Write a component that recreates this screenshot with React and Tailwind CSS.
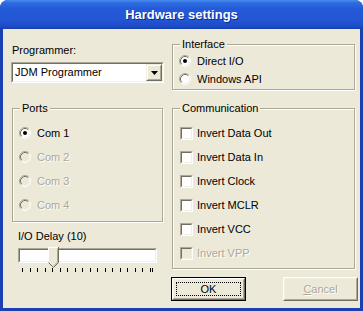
import React from "react";

const face = "bg-[#ECE9D8]";

function Radio({ checked, disabled }) {
  return (
    <svg width="12" height="12" viewBox="0 0 12 12" className="shrink-0">
      <circle cx="6" cy="6" r="5" fill={disabled ? "#ECE9D8" : "#ffffff"} />
      <path d="M2.11 9.89 A5.5 5.5 0 0 1 9.89 2.11" fill="none" stroke="#ACA899" />
      <path d="M9.89 2.11 A5.5 5.5 0 0 1 2.11 9.89" fill="none" stroke="#ffffff" />
      <path d="M2.82 9.18 A4.5 4.5 0 0 1 9.18 2.82" fill="none" stroke="#716F64" />
      <path d="M9.18 2.82 A4.5 4.5 0 0 1 2.82 9.18" fill="none" stroke="#F1EFE2" />
      {checked && <circle cx="6" cy="6" r="2" fill="#000" />}
    </svg>
  );
}

function Check({ disabled }) {
  return (
    <div className="w-[13px] h-[13px] shrink-0 flex border border-t-[#ACA899] border-l-[#ACA899] border-r-white border-b-white">
      <div
        className={`flex-1 border border-t-[#716F64] border-l-[#716F64] border-r-[#F1EFE2] border-b-[#F1EFE2] ${
          disabled ? "bg-[#ECE9D8]" : "bg-white"
        }`}
      />
    </div>
  );
}

function Group({ label, className, children }) {
  return (
    <div
      className={`flex flex-col border border-[#ACA899] shadow-[inset_1px_1px_0_#ffffff,1px_1px_0_#ffffff] ${className}`}
    >
      <span className={`self-start -mt-[7px] ml-[7px] px-[2px] leading-[13px] ${face}`}>{label}</span>
      {children}
    </div>
  );
}

const dim = "text-[#ACA899] [text-shadow:1px_1px_0_#ffffff]";

export default function App() {
  const ports = ["Com 1", "Com 2", "Com 3", "Com 4"];
  const comm = ["Invert Data Out", "Invert Data In", "Invert Clock", "Invert MCLR", "Invert VCC", "Invert VPP"];
  const ticks = Array.from({ length: 18 });

  return (
    <div className="w-[363px] h-[311px] flex flex-col rounded-t-[8px] overflow-hidden bg-[#1a40b4] font-['Liberation_Sans',Arial,sans-serif] text-[11px] text-black">
      {/* title bar */}
      <div className="h-[29px] shrink-0 flex items-center justify-center bg-[linear-gradient(to_bottom,#4a8cf0_0px,#2d6be0_3px,#2459d8_9px,#2256d4_20px,#1d4cc6_26px,#163fb0_29px)]">
        <span className="font-bold text-[13px] text-white mt-[1px] [text-shadow:1px_1px_0_#0c2a8c]">
          Hardware settings
        </span>
      </div>

      {/* client */}
      <div className={`flex-1 mx-[3px] mb-[3px] flex ${face}`}>
        {/* left column */}
        <div className="ml-[8px] w-[153px] flex flex-col">
          <span className="mt-[15px] leading-[13px] ml-[1px]">Programmer:</span>
          <div className="mt-[5px] h-[21px] flex border border-t-[#ACA899] border-l-[#ACA899] border-r-white border-b-white">
            <div className="flex-1 flex items-center bg-white border border-t-[#716F64] border-l-[#716F64] border-r-[#F1EFE2] border-b-[#F1EFE2]">
              <span className="flex-1 pl-[2px] leading-[13px]">JDM Programmer</span>
              <div className="w-[16px] h-full flex border border-t-[#F1EFE2] border-l-[#F1EFE2] border-r-[#716F64] border-b-[#716F64]">
                <div className={`flex-1 flex items-center justify-center border border-t-white border-l-white border-r-[#ACA899] border-b-[#ACA899] ${face}`}>
                  <svg width="7" height="4" viewBox="0 0 7 4">
                    <path d="M0 0h7L3.5 4z" fill="#000" />
                  </svg>
                </div>
              </div>
            </div>
          </div>

          <Group label="Ports" className="mt-[25px] ml-[1px] w-[151px] h-[114px]">
            <div className="mt-[6px] flex flex-col">
              {ports.map((p, i) => (
                <div key={p} className="h-[24px] flex items-center pl-[6px]">
                  <Radio checked={i === 0} disabled={i > 0} />
                  <span className={`ml-[6px] ${i > 0 ? dim : ""}`}>{p}</span>
                </div>
              ))}
            </div>
          </Group>

          <span className="mt-[8px] ml-[7px] leading-[13px]">I/O Delay (10)</span>
          <div className="mt-[5px] ml-[7px] relative w-[139px]">
            <div className="h-[15px] flex border border-t-[#ACA899] border-l-[#ACA899] border-r-white border-b-white">
              <div className="flex-1 bg-white border border-t-[#716F64] border-l-[#716F64] border-r-[#F1EFE2] border-b-[#F1EFE2]" />
            </div>
            <svg width="11" height="21" viewBox="0 0 11 21" className="absolute left-[30px] -top-[1px]">
              <path d="M0.5 0.5H10.5V15.5L5.5 20.5L0.5 15.5Z" fill="#ECE9D8" />
              <path d="M0.5 15.5V0.5H10" fill="none" stroke="#ffffff" />
              <path d="M10.5 0V15.5L5.5 20.5L0.5 15.5" fill="none" stroke="#716F64" />
              <path d="M9.5 1.5V15L5.5 19" fill="none" stroke="#ACA899" />
            </svg>
            <div className="mt-[5px] ml-[4px] flex items-start">
              <div className="w-[129px] flex justify-between">
                {ticks.map((_, i) => (
                  <div key={i} className="w-px h-[4px] bg-black" />
                ))}
              </div>
              <div className="ml-[1px] w-px h-[4px] bg-black" />
            </div>
          </div>
        </div>

        {/* right column */}
        <div className="ml-[7px] flex flex-col">
          <Group label="Interface" className="mt-[15px] ml-[1px] w-[183px] h-[46px]">
            <div className="mt-[1px] flex flex-col">
              <div className="h-[18px] flex items-center pl-[6px]">
                <Radio checked />
                <span className="ml-[6px]">Direct I/O</span>
              </div>
              <div className="h-[18px] flex items-center pl-[6px]">
                <Radio />
                <span className="ml-[6px]">Windows API</span>
              </div>
            </div>
          </Group>

          <Group label="Communication" className="mt-[18px] ml-[1px] w-[183px] h-[161px]">
            <div className="mt-[6px] flex flex-col">
              {comm.map((c, i) => (
                <div key={c} className="h-[24px] flex items-center pl-[7px]">
                  <Check disabled={i === 5} />
                  <span className={`ml-[4px] ${i === 5 ? dim : ""}`}>{c}</span>
                </div>
              ))}
            </div>
          </Group>

          <div className="mt-[8px] flex justify-between w-[187px]">
            <div className="w-[75px] h-[24px] flex border border-black">
              <div className="flex-1 flex border border-t-white border-l-white border-r-[#716F64] border-b-[#716F64]">
                <div className={`flex-1 flex p-[2px] border border-t-[#F1EFE2] border-l-[#F1EFE2] border-r-[#ACA899] border-b-[#ACA899] ${face}`}>
                  <div className="flex-1 flex items-center justify-center border border-dotted border-black">
                    OK
                  </div>
                </div>
              </div>
            </div>
            <div className="w-[75px] h-[24px] flex border border-t-white border-l-white border-r-[#716F64] border-b-[#716F64]">
              <div className={`flex-1 flex items-center justify-center border border-t-[#F1EFE2] border-l-[#F1EFE2] border-r-[#ACA899] border-b-[#ACA899] ${face}`}>
                <span className={dim}>
                  <span className="underline">C</span>ancel
                </span>
              </div>
            </div>
          </div>
        </div>
      </div>
    </div>
  );
}
